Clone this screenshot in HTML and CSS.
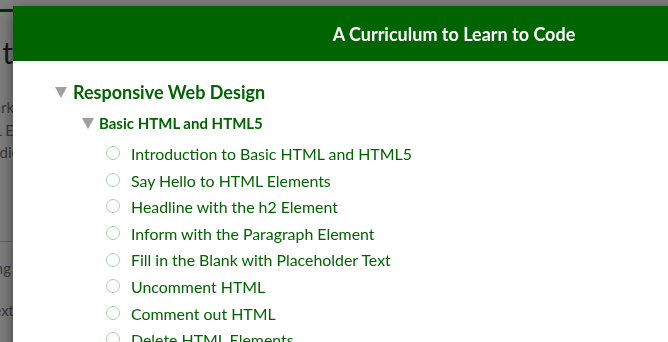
FILE: index.html
```html
<!DOCTYPE html>
<html lang="en">
<head>
  <meta charset="UTF-8">
  <meta name="viewport" content="width=device-width, initial-scale=1.0">
  <title>freeCodeCamp - Map</title>
  <link rel="stylesheet" href="styles.css">
</head>
<body>
  <!-- page behind the modal -->
  <div class="page">
    <div class="nav"></div>
    <div class="content">
      <div class="page-title">Learn to</div>
      <div class="page-text">
        <div class="line l1"><span>Remark</span></div>
        <div class="line l2"><span>HTML E</span></div>
        <div class="line l3"><span>Studio</span></div>
      </div>
      <hr class="page-rule">
      <div class="page-text">
        <div class="line l4"><span>Heading</span></div>
        <div class="line l5"><span>Next</span></div>
      </div>
    </div>
  </div>

  <div class="backdrop"></div>

  <div class="modal">
    <div class="modal-header">
      <h3 class="modal-title">A Curriculum to Learn to Code</h3>
    </div>
    <div class="modal-body">
      <div class="superblock">
        <div class="superblock-title"><span class="caret"></span>Responsive Web Design</div>
        <div class="block">
          <div class="block-title"><span class="caret"></span>Basic HTML and HTML5</div>
          <ul class="challenges">
            <li><span class="check"></span>Introduction to Basic HTML and HTML5</li>
            <li><span class="check"></span>Say Hello to HTML Elements</li>
            <li><span class="check"></span>Headline with the h2 Element</li>
            <li><span class="check"></span>Inform with the Paragraph Element</li>
            <li><span class="check"></span>Fill in the Blank with Placeholder Text</li>
            <li><span class="check"></span>Uncomment HTML</li>
            <li><span class="check"></span>Comment out HTML</li>
            <li><span class="check"></span>Delete HTML Elements</li>
          </ul>
        </div>
      </div>
    </div>
  </div>
</body>
</html>
```

FILE: styles.css
```css
body { margin: 0; overflow: hidden; height: 342px; font-family: Lato, "Open Sans", sans-serif; background: #fff; }

/* page behind */
.nav { height: 9px; border-bottom: 3px solid #006400; }
.page-title { width: 30px; display: flex; justify-content: flex-end; margin-top: 22px; font-size: 30px; line-height: 36px; color: #333; white-space: nowrap; }
.page-text { font-size: 15px; color: #777; }
.line { display: flex; justify-content: flex-end; white-space: nowrap; line-height: 22.5px; }
.l1 { margin-top: 26px; width: 14px; }
.l2 { width: 14px; }
.l3 { width: 20px; }
.page-rule { margin: 77px 0 0; border: 0; border-top: 1px solid #ccc; }
.l4 { margin-top: 15px; width: 11px; }
.l5 { margin-top: 20px; width: 14px; }

.backdrop { position: fixed; inset: 0; background: #000; opacity: .5; }

/* modal */
.modal { position: absolute; left: 13px; top: 6px; width: 882px; background: #fff; box-shadow: 0 5px 15px rgba(0,0,0,.5); }
.modal-header { height: 55px; background: #006400; display: flex; align-items: center; justify-content: center; }
.modal-title { margin: 0; color: #fff; font-size: 18px; font-weight: 700; line-height: 20px; padding-top: 1px; }
.modal-body { padding: 18px 0 20px 42px; color: #006400; }

.caret { display: inline-block; width: 0; height: 0; border-left: 6px solid transparent; border-right: 6px solid transparent; border-top: 11px solid #a0a0a0; }
.superblock-title { font-size: 18px; font-weight: 700; line-height: 26px; display: flex; align-items: center; gap: 6px; }
.block { padding-left: 27px; }
.block-title { margin-top: 8px; font-size: 15px; font-weight: 700; line-height: 20px; display: flex; align-items: center; gap: 5px; }
.challenges { list-style: none; margin: 8px 0 0; padding: 0 0 0 24px; }
.challenges li { font-size: 15.9px; line-height: 26.6px; display: flex; align-items: center; gap: 11px; white-space: nowrap; }
.check { width: 12px; height: 12px; border: 1px solid #a6d3a6; border-radius: 50%; margin-top: -2px; flex: none; }
```
